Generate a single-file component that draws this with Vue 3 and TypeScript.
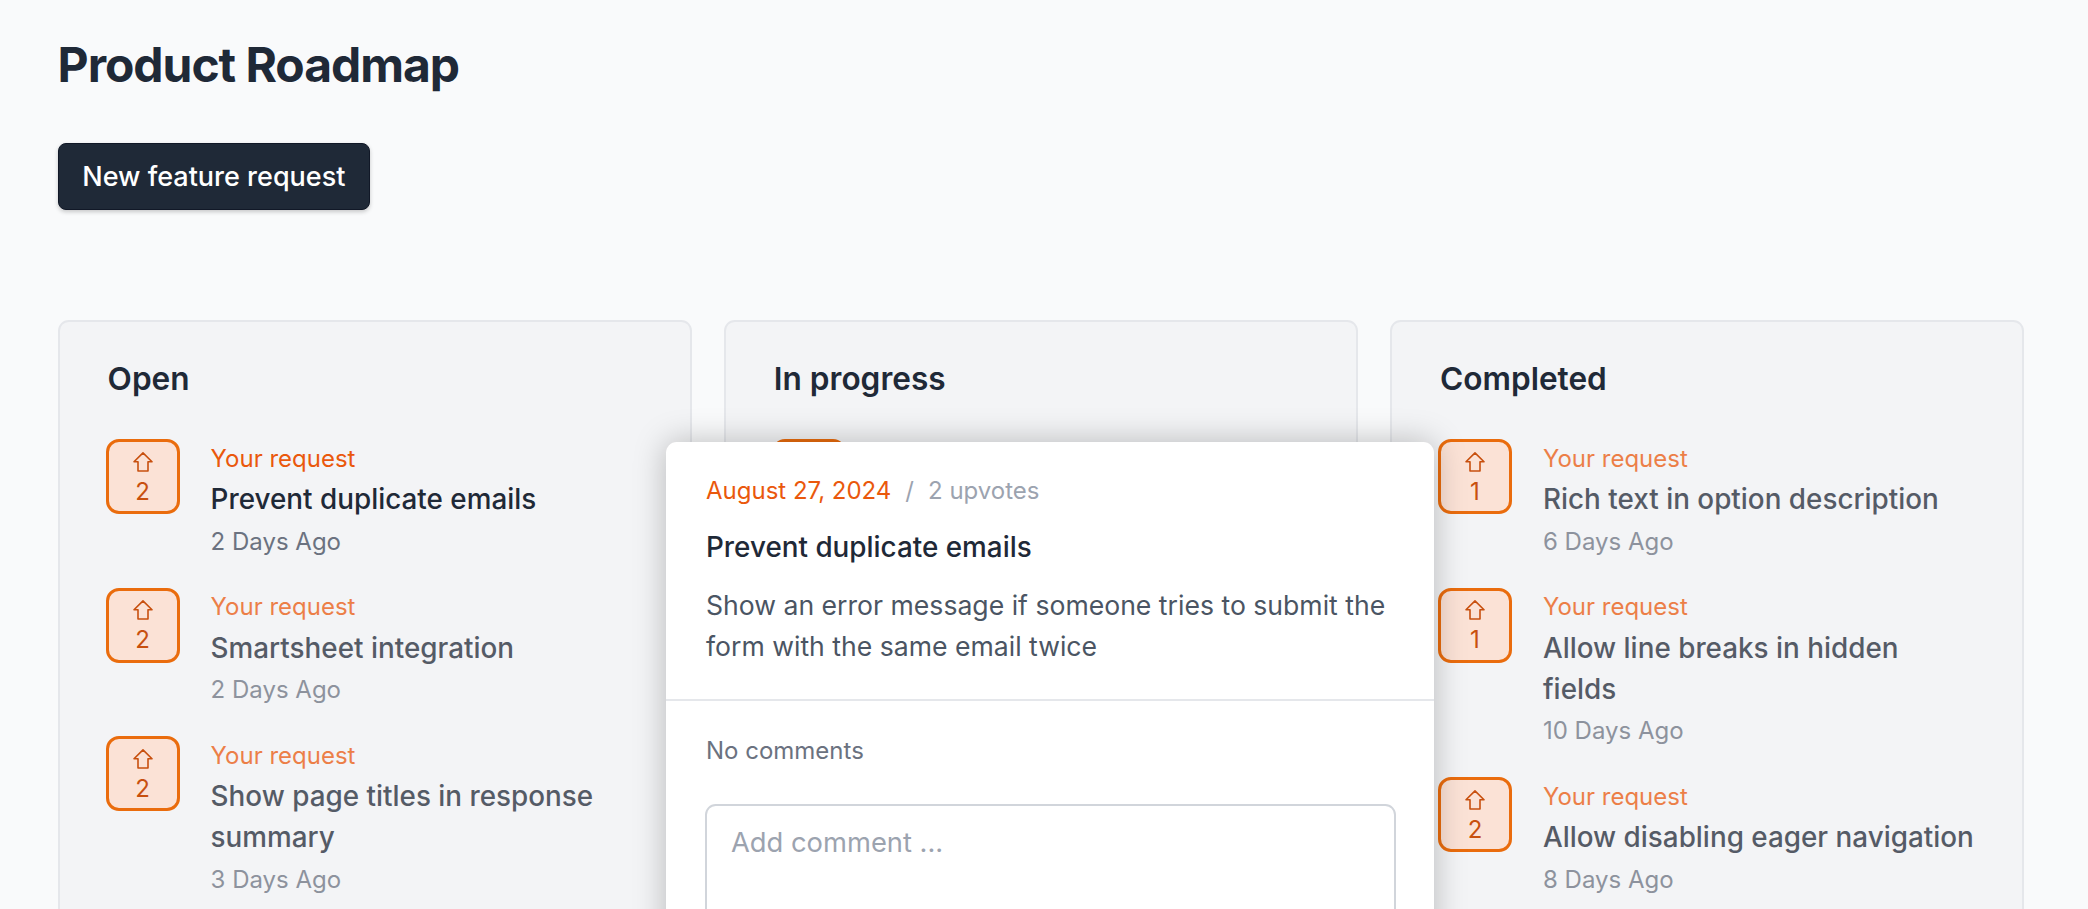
<script setup lang="ts">
interface Item {
  votes: number
  title: string
  age: string
  active?: boolean
}
interface Column {
  name: string
  items: Item[]
}
const columns: Column[] = [
  {
    name: 'Open',
    items: [
      { votes: 2, title: 'Prevent duplicate emails', age: '2 Days Ago', active: true },
      { votes: 2, title: 'Smartsheet integration', age: '2 Days Ago' },
      { votes: 2, title: 'Show page titles in response summary', age: '3 Days Ago' }
    ]
  },
  {
    name: 'In progress',
    items: [{ votes: 2, title: '', age: '' }]
  },
  {
    name: 'Completed',
    items: [
      { votes: 1, title: 'Rich text in option description', age: '6 Days Ago' },
      { votes: 1, title: 'Allow line breaks in hidden fields', age: '10 Days Ago' },
      { votes: 2, title: 'Allow disabling eager navigation', age: '8 Days Ago' }
    ]
  }
]
</script>

<template>
  <div class="page">
    <h1 class="title">Product Roadmap</h1>
    <button class="new-btn" type="button">New feature request</button>
    <div class="board">
      <section v-for="col in columns" :key="col.name" class="column">
        <h2 class="col-title">{{ col.name }}</h2>
        <ul class="items">
          <li v-for="(item, i) in col.items" :key="i" class="item" :class="{ active: item.active }">
            <div class="vote">
              <template v-if="item.title">
                <svg class="arrow" viewBox="0 0 20 20" width="20" height="20" fill="none">
                  <path d="M10 .9 19 9.8H15V19H5V9.8H1Z" stroke="#c8500f" stroke-width="1.6" stroke-linejoin="round" />
                </svg>
                <span class="count">{{ item.votes }}</span>
              </template>
            </div>
            <div v-if="item.title" class="body">
              <div class="tag">Your request</div>
              <div class="name">{{ item.title }}</div>
              <div class="age">{{ item.age }}</div>
            </div>
          </li>
        </ul>
      </section>
    </div>
    <aside class="modal">
      <div class="modal-head">
        <div class="meta">
          <span class="date">August 27, 2024</span>
          <span class="sep">/</span>
          <span class="upvotes">2 upvotes</span>
        </div>
        <h3 class="modal-title">Prevent duplicate emails</h3>
        <p class="desc">Show an error message if someone tries to submit the form with the same email twice</p>
      </div>
      <div class="modal-foot">
        <div class="no-comments">No comments</div>
        <textarea class="comment" placeholder="Add comment ..."></textarea>
      </div>
    </aside>
  </div>
</template>

<style>
html,
body {
  margin: 0;
  background: #f9fafb;
}
</style>

<style scoped>
* {
  box-sizing: border-box;
}
.page {
  position: relative;
  height: 909px;
  overflow: hidden;
  padding: 36px 65px 0 57.6px;
  background: #f9fafb;
  font-family: Inter, "Noto Sans", sans-serif;
  color: #1f2937;
}
.title {
  margin: 0;
  font-size: 48px;
  line-height: 58px;
  font-weight: 700;
  letter-spacing: -1.05px;
  color: #1f2937;
}
.new-btn {
  display: block;
  margin-top: 49px;
  width: 312.5px;
  height: 67px;
  padding: 0;
  border: 1.33px solid #111827;
  border-radius: 8px;
  background: #1f2937;
  color: #fff;
  font: 500 27px Inter, sans-serif;
  box-shadow: 0 2px 4px rgba(0, 0, 0, 0.2);
}
.board {
  display: grid;
  grid-template-columns: repeat(3, 634px);
  column-gap: 32.2px;
  margin-top: 110px;
}
.column {
  height: 700px;
  padding: 30px 47px 0 48px;
  border: 2px solid #e5e7eb;
  border-radius: 10.67px;
  background: #f3f4f6;
}
.col-title {
  margin: 0;
  font-size: 31.6px;
  line-height: 54px;
  font-weight: 600;
  color: #1f2937;
}
.items {
  margin: 33px 0 0;
  padding: 0;
  list-style: none;
}
.item {
  display: flex;
  gap: 31px;
  margin-left: -2px;
  margin-bottom: 30px;
}
.vote {
  flex: none;
  display: flex;
  flex-direction: column;
  align-items: center;
  width: 74px;
  height: 75px;
  padding-top: 9.5px;
  border: 3px solid #ea6c0d;
  border-radius: 13px;
  background: #fbe2d6;
}
.arrow {
  display: block;
}
.count {
  margin-top: 6px;
  font-size: 24px;
  line-height: 28px;
  color: #c8500f;
}
.body {
  flex: 1;
  min-width: 0;
  padding-top: 4.5px;
  opacity: 0.75;
}
.item.active .body {
  opacity: 1;
}
.tag {
  font-size: 24px;
  line-height: 30px;
  color: #ea580c;
}
.name {
  margin-top: 5.5px;
  font-size: 27.85px;
  line-height: 41px;
  font-weight: 500;
  color: #1f2937;
}
.age {
  margin-top: 5.5px;
  font-size: 24px;
  line-height: 32px;
  color: #6b7280;
}
.modal {
  position: absolute;
  left: 666px;
  top: 442px;
  width: 768px;
  height: 600px;
  border-radius: 10.67px;
  background: #fff;
  box-shadow: 0 0 32px rgba(0, 0, 0, 0.25);
}
.modal-head {
  height: 259px;
  padding: 31px 40px 0;
  border-bottom: 2px solid #e5e7eb;
}
.meta {
  display: flex;
  align-items: center;
  gap: 14px;
  font-size: 24px;
  line-height: 36px;
}
.date {
  color: #ea580c;
}
.sep,
.upvotes {
  color: #9ca3af;
}
.modal-title {
  margin: 19px 0 0;
  font-size: 27.85px;
  line-height: 38px;
  font-weight: 500;
  color: #1f2937;
}
.desc {
  margin: 19px 0 0;
  font-size: 26.6px;
  line-height: 41px;
  color: #4b5563;
}
.modal-foot {
  padding: 34px 40px 0;
}
.no-comments {
  font-size: 24px;
  line-height: 32px;
  color: #6b7280;
}
.comment {
  display: block;
  width: 691px;
  height: 160px;
  margin: 37px 0 0 -1px;
  padding: 17px 24px;
  border: 2.67px solid #d1d5db;
  border-radius: 10.67px;
  font: 400 27.33px/1.5 Inter, sans-serif;
  resize: none;
  outline: none;
}
.comment::placeholder {
  color: #9ca3af;
}
</style>
